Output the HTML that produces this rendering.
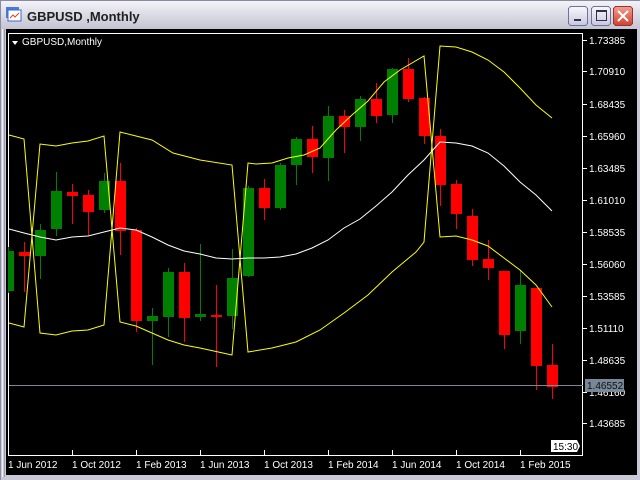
<!DOCTYPE html>
<html><head><meta charset="utf-8"><style>
html,body{margin:0;padding:0;width:640px;height:480px;overflow:hidden;background:#c9c9d6;font-family:"Liberation Sans",sans-serif}
</style></head><body>
<svg width="640" height="480" xmlns="http://www.w3.org/2000/svg" style="position:absolute;left:0;top:0" shape-rendering="crispEdges">
<defs>
<linearGradient id="tb" x1="0" y1="0" x2="0" y2="1"><stop offset="0" stop-color="#f4f4f8"/><stop offset="0.5" stop-color="#dcdce6"/><stop offset="1" stop-color="#c4c4d2"/></linearGradient>
<linearGradient id="bt" x1="0" y1="0" x2="0" y2="1"><stop offset="0" stop-color="#f8f8fc"/><stop offset="1" stop-color="#c8c8dc"/></linearGradient>
<linearGradient id="cl" x1="0" y1="0" x2="0" y2="1"><stop offset="0" stop-color="#f0a090"/><stop offset="1" stop-color="#d04030"/></linearGradient>
</defs>
<rect x="0" y="0" width="640" height="480" fill="#c9c9d6"/>
<rect x="0" y="0" width="640" height="29" fill="url(#tb)"/>
<rect x="0" y="0" width="640" height="1" fill="#8a8aa0"/>
<rect x="0" y="0" width="1" height="480" fill="#8a8aa0"/>
<rect x="2" y="29" width="1" height="448" fill="#f0f0f4"/>
<rect x="4" y="29" width="1" height="448" fill="#9898b0"/>
<!-- title icon -->
<rect x="6" y="7" width="13" height="11" fill="#4a7ad8"/>
<rect x="8" y="10" width="13" height="11" fill="#fff" stroke="#3a6ad0"/>
<polyline points="10,18 13,15 15,17 19,13" fill="none" stroke="#e04020" shape-rendering="auto"/>
<text x="27" y="21" font-size="13" font-weight="bold" fill="#202020">GBPUSD ,Monthly</text>
<!-- buttons -->
<rect x="568.5" y="6.5" width="19" height="19" rx="3" fill="url(#bt)" stroke="#7070a0"/>
<rect x="574" y="19" width="7" height="2" fill="#303050"/>
<rect x="591.5" y="6.5" width="19" height="19" rx="3" fill="url(#bt)" stroke="#7070a0"/>
<rect x="596.5" y="10.5" width="10" height="10" fill="none" stroke="#303050"/><rect x="596" y="10" width="11" height="2" fill="#303050"/>
<rect x="613.5" y="6.5" width="19" height="19" rx="3" fill="url(#cl)" stroke="#a03030"/>
<path d="M618 11 L628 21 M628 11 L618 21" stroke="#fff" stroke-width="2" shape-rendering="auto"/>
<!-- chart area -->
<rect x="6" y="29" width="631" height="446" fill="#000"/>
<rect x="8.5" y="33.5" width="574" height="422" fill="none" stroke="#fff"/>
<path d="M12 41 L18 41 L15 45 Z" fill="#fff" shape-rendering="auto"/>
<text x="22" y="45" font-size="10" fill="#fff">GBPUSD,Monthly</text>
<g font-size="10" fill="#fff">
<g stroke="#fff"><line x1="583" y1="40.5" x2="587" y2="40.5"/><line x1="583" y1="71.5" x2="587" y2="71.5"/><line x1="583" y1="104.5" x2="587" y2="104.5"/><line x1="583" y1="136.5" x2="587" y2="136.5"/><line x1="583" y1="168.5" x2="587" y2="168.5"/><line x1="583" y1="200.5" x2="587" y2="200.5"/><line x1="583" y1="232.5" x2="587" y2="232.5"/><line x1="583" y1="264.5" x2="587" y2="264.5"/><line x1="583" y1="296.5" x2="587" y2="296.5"/><line x1="583" y1="328.5" x2="587" y2="328.5"/><line x1="583" y1="360.5" x2="587" y2="360.5"/><line x1="583" y1="392.5" x2="587" y2="392.5"/><line x1="583" y1="423.5" x2="587" y2="423.5"/></g>
<text x="589" y="44">1.73385</text><text x="589" y="75">1.70910</text><text x="589" y="108">1.68435</text><text x="589" y="140">1.65960</text><text x="589" y="172">1.63485</text><text x="589" y="204">1.61010</text><text x="589" y="236">1.58535</text><text x="589" y="268">1.56060</text><text x="589" y="300">1.53585</text><text x="589" y="332">1.51110</text><text x="589" y="364">1.48635</text><text x="589" y="396">1.46160</text><text x="589" y="427">1.43685</text>
<g stroke="#fff"><line x1="8.5" y1="450" x2="8.5" y2="456"/><line x1="72.5" y1="450" x2="72.5" y2="456"/><line x1="136.5" y1="450" x2="136.5" y2="456"/><line x1="200.5" y1="450" x2="200.5" y2="456"/><line x1="264.5" y1="450" x2="264.5" y2="456"/><line x1="328.5" y1="450" x2="328.5" y2="456"/><line x1="392.5" y1="450" x2="392.5" y2="456"/><line x1="456.5" y1="450" x2="456.5" y2="456"/><line x1="520.5" y1="450" x2="520.5" y2="456"/></g>
<text x="8" y="468">1 Jun 2012</text><text x="72" y="468">1 Oct 2012</text><text x="136" y="468">1 Feb 2013</text><text x="200" y="468">1 Jun 2013</text><text x="264" y="468">1 Oct 2013</text><text x="328" y="468">1 Feb 2014</text><text x="392" y="468">1 Jun 2014</text><text x="456" y="468">1 Oct 2014</text><text x="520" y="468">1 Feb 2015</text>
</g>
<g id="c">
<!-- candles: wick then body -->
<g fill="#008000">
<rect x="8" y="247" width="1" height="46"/><rect x="9" y="251" width="5" height="40"/>
<rect x="40" y="224" width="1" height="55"/><rect x="35" y="230" width="11" height="26"/>
<rect x="56" y="172" width="1" height="64"/><rect x="51" y="191" width="11" height="38"/>
<rect x="104" y="173" width="1" height="40"/><rect x="99" y="181" width="11" height="29"/>
<rect x="152" y="308" width="1" height="57"/><rect x="147" y="316" width="11" height="5"/>
<rect x="168" y="268" width="1" height="69"/><rect x="163" y="272" width="11" height="45"/>
<rect x="200" y="244" width="1" height="77"/><rect x="195" y="314" width="11" height="3"/>
<rect x="232" y="249" width="1" height="80"/><rect x="227" y="278" width="11" height="38"/>
<rect x="248" y="186" width="1" height="91"/><rect x="243" y="188" width="11" height="88"/>
<rect x="280" y="163" width="1" height="47"/><rect x="275" y="165" width="11" height="43"/>
<rect x="296" y="137" width="1" height="48"/><rect x="291" y="139" width="11" height="26"/>
<rect x="328" y="106" width="1" height="75"/><rect x="323" y="116" width="11" height="42"/>
<rect x="360" y="96" width="1" height="45"/><rect x="355" y="99" width="11" height="28"/>
<rect x="392" y="68" width="1" height="55"/><rect x="387" y="69" width="11" height="46"/>
<rect x="520" y="270" width="1" height="74"/><rect x="515" y="285" width="11" height="46"/>
</g>
<g fill="#ff0000">
<rect x="24" y="242" width="1" height="50"/><rect x="19" y="252" width="11" height="4"/>
<rect x="72" y="184" width="1" height="40"/><rect x="67" y="192" width="11" height="4"/>
<rect x="88" y="190" width="1" height="45"/><rect x="83" y="195" width="11" height="17"/>
<rect x="120" y="163" width="1" height="92"/><rect x="115" y="181" width="11" height="50"/>
<rect x="136" y="228" width="1" height="104"/><rect x="131" y="230" width="11" height="91"/>
<rect x="184" y="263" width="1" height="79"/><rect x="179" y="272" width="11" height="46"/>
<rect x="216" y="285" width="1" height="82"/><rect x="211" y="315" width="11" height="2"/>
<rect x="264" y="179" width="1" height="41"/><rect x="259" y="188" width="11" height="20"/>
<rect x="312" y="126" width="1" height="47"/><rect x="307" y="139" width="11" height="18"/>
<rect x="344" y="110" width="1" height="43"/><rect x="339" y="116" width="11" height="11"/>
<rect x="376" y="83" width="1" height="40"/><rect x="371" y="99" width="11" height="17"/>
<rect x="408" y="58" width="1" height="44"/><rect x="403" y="69" width="11" height="30"/>
<rect x="424" y="97" width="1" height="47"/><rect x="419" y="98" width="11" height="38"/>
<rect x="440" y="129" width="1" height="77"/><rect x="435" y="136" width="11" height="49"/>
<rect x="456" y="180" width="1" height="49"/><rect x="451" y="184" width="11" height="30"/>
<rect x="472" y="209" width="1" height="57"/><rect x="467" y="216" width="11" height="44"/>
<rect x="488" y="240" width="1" height="40"/><rect x="483" y="259" width="11" height="9"/>
<rect x="504" y="271" width="1" height="78"/><rect x="499" y="271" width="11" height="64"/>
<rect x="536" y="288" width="1" height="102"/><rect x="531" y="288" width="11" height="78"/>
<rect x="552" y="344" width="1" height="55"/><rect x="547" y="365" width="11" height="22"/>
</g>
</g>
<g fill="none" stroke-width="1" shape-rendering="auto">
<polyline stroke="#ffff00" points="9,135 24,139 40,333 56,335 72,331 88,330 104,325 120,132 136,136 152,140 173,153 200,160 232,165 248,352 272,348 296,342 320,330 344,313 368,295 392,272 416,252 424,242 440,46 456,47 472,52 488,60 504,72 520,88 536,105 552,118"/>
<polyline stroke="#ffff00" points="9,323 24,327 40,144 56,146 72,143 88,141 104,136 120,322 136,326 152,333 168,340 184,345 200,348 232,355 248,163 256,164 272,163 288,158 304,155 320,148 336,130 352,115 368,101 384,82 400,70 424,56 440,237 456,236 472,240 488,246 504,258 520,270 536,285 552,307"/>
<polyline stroke="#ffffff" points="9,229 24,233 40,237 56,240 72,237 88,236 104,232 120,228 136,230 152,237 168,245 184,251 200,254 216,258 232,259 248,258 264,258 280,257 296,254 312,248 328,240 344,228 360,219 376,206 392,192 408,175 424,160 440,142 456,143 472,146 488,153 504,166 520,182 536,195 552,211"/>
</g>
<line x1="9" y1="385.5" x2="583" y2="385.5" stroke="#778899"/>
<rect x="585" y="379" width="39" height="13" fill="#778899"/>
<text x="587" y="389" font-size="10" fill="#101010">1.46552</text>
<path d="M551 440 L577 440 L580 446 L577 452 L551 452 Z" fill="#fff"/>
<text x="553" y="450" font-size="10" fill="#000">15:30</text>
</svg>
</body></html>
